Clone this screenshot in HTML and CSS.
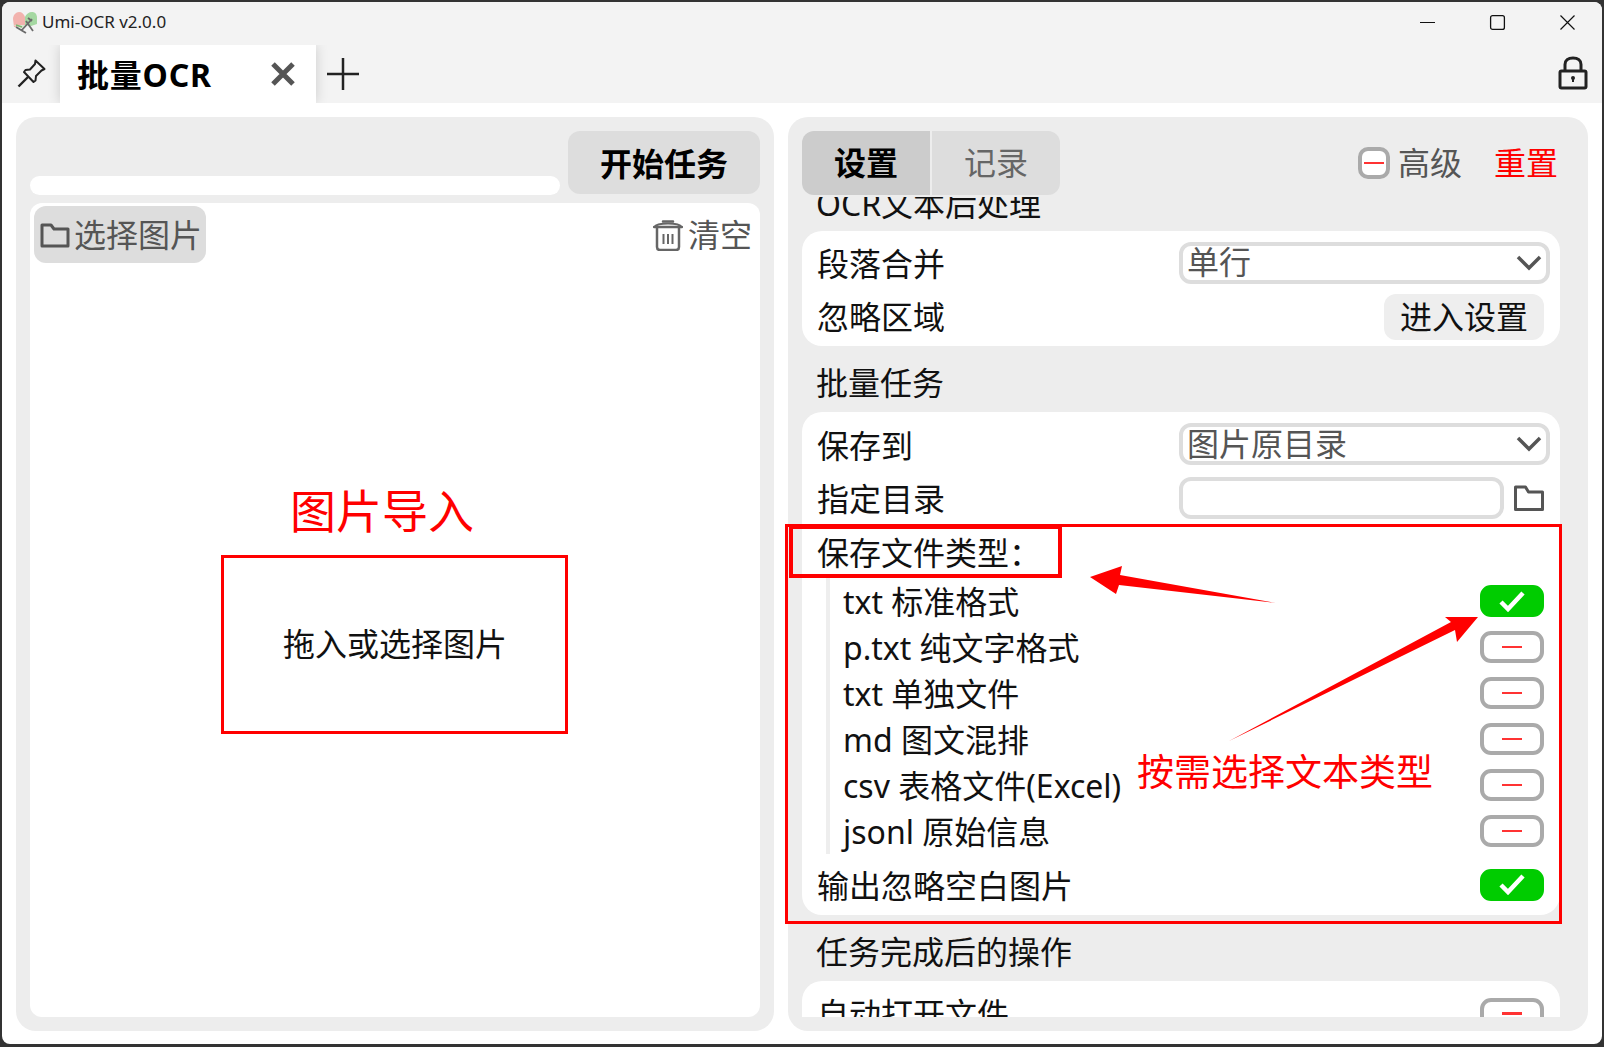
FILE: index.html
```html
<!DOCTYPE html>
<html lang="zh">
<head>
<meta charset="utf-8">
<title>Umi-OCR v2.0.0</title>
<link rel="stylesheet" href="styles.css">
</head>
<body>
<div class="window">
  <header class="titlebar">
    <svg class="logo" width="26" height="24" viewBox="0 0 26 24"><path d="M1 8c0-4 3-7 6-7s5 2 6 5v8l-5 2H2z" fill="#f2b3ae"/><path d="M13 6c1-3 4-5 7-5s5 2 5 6v6l-6 2-6-1z" fill="#a5d8a2"/><path d="M1 14h13l-3 4z" fill="#dbe6d2"/><path d="M4 16l10 6M9 20l11-12M14 10l7 10M16 7l4 3" stroke="#6b6b6b" stroke-width="1.800" fill="none"/><path d="M4 14l6 2" stroke="#7cb66f" stroke-width="1.500"/></svg>
    <span class="title">Umi-OCR v2.0.0</span>
    <div class="winbtns">
      <svg width="17" height="17" viewBox="0 0 17 17"><path d="M1 8.500h15" stroke="#111" stroke-width="1.200"/></svg>
      <svg width="17" height="17" viewBox="0 0 17 17"><rect x="1.600" y="1.600" width="13.800" height="13.800" rx="2" fill="none" stroke="#111" stroke-width="1.300"/></svg>
      <svg width="17" height="17" viewBox="0 0 17 17"><path d="M1.500 1.500l14 14M15.500 1.500l-14 14" stroke="#111" stroke-width="1.200"/></svg>
    </div>
  </header>
  <nav class="tabbar">
    <svg class="pin" width="30" height="30" viewBox="0 0 30 30"><path d="M18.500 2.500l9 8.500-3 1.500-5.500 5.500-.5 4.500-2 1.500L7 14l1.500-2 4.500-.5 5-5.500z" fill="none" stroke="#222" stroke-width="2" stroke-linejoin="round"/><path d="M11 19L1.500 28.500" stroke="#222" stroke-width="2.400"/></svg>
    <div class="tab">
      <span class="tab-name">批量OCR</span>
      <svg width="26" height="26" viewBox="0 0 26 26"><path d="M3 3l20 20M23 3L3 23" stroke="#555" stroke-width="5"/></svg>
    </div>
    <svg class="plus" width="32" height="32" viewBox="0 0 32 32"><path d="M0 16h32M16 0v32" stroke="#222" stroke-width="2.500"/></svg>
    <svg class="lock" width="30" height="34" viewBox="0 0 30 34"><path d="M7 15V8.500C7 4.500 10 2 15 2s8 2.500 8 6.500V15" fill="none" stroke="#222" stroke-width="3"/><rect x="2" y="15" width="26" height="17" rx="1.500" fill="none" stroke="#222" stroke-width="3"/><circle cx="15" cy="22" r="2" fill="#222"/><path d="M15 22v4" stroke="#222" stroke-width="2"/></svg>
  </nav>
  <main class="content">
    <section class="panel left">
      <div class="left-head">
        <div class="progress"></div>
        <button class="start">开始任务</button>
      </div>
      <div class="list">
        <div class="list-head">
          <div class="choose">
            <svg width="30" height="28" viewBox="0 0 30 28"><path d="M2 25V4h9l3 4h14v17z" fill="none" stroke="#555" stroke-width="3" stroke-linejoin="round"/></svg>
            <span>选择图片</span>
          </div>
          <div class="clear">
            <svg width="30" height="32" viewBox="0 0 30 32"><path d="M1 8h28M10 2.500h10" stroke="#666" stroke-width="2.500" stroke-linecap="round"/><path d="M1.500 8C3 5 8 4.500 15 4.500S27 5 28.500 8" fill="none" stroke="#666" stroke-width="2"/><path d="M4 9v19c0 2 1 3 3 3h16c2 0 3-1 3-3V9" fill="none" stroke="#666" stroke-width="2.500"/><path d="M10.500 15v10M15 15v10M19.500 15v10" stroke="#666" stroke-width="2"/></svg>
            <span>清空</span>
          </div>
        </div>
        <div class="drop">拖入或选择图片</div>
      </div>
    </section>
    <section class="panel right">
      <div class="right-head">
        <div class="seg">
          <div class="seg-item on">设置</div>
          <div class="seg-item">记录</div>
        </div>
        <div class="adv">
          <span class="mini"><i></i></span>
          <span class="adv-text">高级</span>
          <span class="reset">重置</span>
        </div>
      </div>
      <div class="scroll">
        <h2 class="sec first">OCR文本后处理</h2>
        <div class="card">
          <div class="row"><span>段落合并</span><div class="combo"><span>单行</span><svg width="26" height="16" viewBox="0 0 26 16"><path d="M2 2l11 11L24 2" fill="none" stroke="#555" stroke-width="3.500"/></svg></div></div>
          <div class="row"><span>忽略区域</span><button class="enter">进入设置</button></div>
        </div>
        <h2 class="sec">批量任务</h2>
        <div class="card batch">
          <div class="row"><span>保存到</span><div class="combo"><span>图片原目录</span><svg width="26" height="16" viewBox="0 0 26 16"><path d="M2 2l11 11L24 2" fill="none" stroke="#555" stroke-width="3.500"/></svg></div></div>
          <div class="row"><span>指定目录</span><div class="pathrow"><div class="input"></div><svg width="30" height="26" viewBox="0 0 30 26"><path d="M1.500 24.500V2h10l3 5h14v17.500z" fill="none" stroke="#555" stroke-width="3" stroke-linejoin="round"/></svg></div></div>
          <div class="row head"><span>保存文件类型：</span></div>
          <div class="subs">
            <div class="sub"><span>txt 标准格式</span><span class="sw on"><svg width="26" height="21" viewBox="0 0 26 21"><path d="M2 11l7 7L24 2" fill="none" stroke="#fff" stroke-width="4.500"/></svg></span></div>
            <div class="sub"><span>p.txt 纯文字格式</span><span class="sw"><i></i></span></div>
            <div class="sub"><span>txt 单独文件</span><span class="sw"><i></i></span></div>
            <div class="sub"><span>md 图文混排</span><span class="sw"><i></i></span></div>
            <div class="sub"><span>csv 表格文件(Excel)</span><span class="sw"><i></i></span></div>
            <div class="sub"><span>jsonl 原始信息</span><span class="sw"><i></i></span></div>
          </div>
          <div class="row last"><span>输出忽略空白图片</span><span class="sw on"><svg width="26" height="21" viewBox="0 0 26 21"><path d="M2 11l7 7L24 2" fill="none" stroke="#fff" stroke-width="4.500"/></svg></span></div>
        </div>
        <h2 class="sec">任务完成后的操作</h2>
        <div class="card">
          <div class="row"><span>自动打开文件</span><span class="sw"><i></i></span></div>
        </div>
      </div>
    </section>
  </main>
  <div class="note box-drop"></div>
  <div class="note label-drop">图片导入</div>
  <div class="note box-types"></div>
  <div class="note box-head"></div>
  <div class="note label-types">按需选择文本类型</div>
  <svg class="note arrows" width="1604" height="1047" viewBox="0 0 1604 1047">
    <path d="M1090 577L1122 566L1120 575L1276 603L1119 585L1116 594z" fill="#f00"/>
    <path d="M1478 617L1457 642L1455 630L1229 741L1451 622L1445 617z" fill="#f00"/>
  </svg>
</div>
</body>
</html>
```
FILE: styles.css
```css
* { box-sizing: border-box; }
html, body { margin: 0; height: 100%; }
body {
  background: #333;
  padding: 2px 2px 3px;
  overflow: hidden;
  font-family: "Noto Sans", "Noto Sans CJK SC", sans-serif;
  font-size: 32px;
  line-height: 44px;
  color: #111;
}
.window {
  position: relative;
  height: 1042px;
  background: #fff;
  border-radius: 8px;
  overflow: hidden;
  display: flex;
  flex-direction: column;
}
.titlebar {
  height: 43px;
  flex: none;
  background: #f3f3f3;
  display: flex;
  align-items: center;
  padding-left: 10px;
}
.logo { flex: none; margin-top: -2px; }
.title { margin-left: 4px; font-size: 17px; line-height: 20px; color: #222; margin-top: -3px; }
.winbtns { margin-left: auto; margin-right: 26px; display: flex; align-items: center; gap: 53px; margin-top: -3px; }
.tabbar {
  height: 58px;
  flex: none;
  background: #f3f3f3;
  display: flex;
  align-items: center;
}
.pin { margin-left: 15px; margin-right: 13px; flex: none; margin-top: -2px; }
.tab {
  width: 256px;
  height: 58px;
  background: #fff;
  display: flex;
  align-items: center;
  justify-content: space-between;
  padding: 0 20px 0 17px;
  box-shadow: 0 0 12px rgba(0,0,0,.16);
  clip-path: inset(0 -16px 0 -16px);
}
.tab-name { font-weight: 700; color: #000; letter-spacing: .8px; padding-top: 1px; }
.plus { margin-left: 11px; flex: none; }
.lock { margin-left: auto; margin-right: 14px; flex: none; margin-top: -2px; }
.content {
  flex: 1;
  min-height: 0;
  display: flex;
  gap: 14px;
  padding: 14px 14px 13px;
}
.panel {
  background: #ededed;
  border-radius: 20px;
  padding: 14px;
  display: flex;
  flex-direction: column;
  min-height: 0;
}
.left { width: 758px; flex: none; }
.right { flex: 1; min-width: 0; }
.left-head {
  display: flex;
  align-items: flex-end;
  justify-content: space-between;
  height: 63px;
  flex: none;
}
.progress { width: 530px; height: 19px; background: #fff; border-radius: 10px; margin-bottom: -1px; }
button {
  font: inherit;
  border: 0;
  padding: 0;
  color: inherit;
}
.start {
  width: 192px;
  height: 63px;
  padding-top: 2px;
  background: #ddd;
  border-radius: 12px;
  font-weight: 700;
  color: #000;
}
.list {
  margin-top: 9px;
  flex: 1;
  min-height: 0;
  background: #fff;
  border-radius: 12px;
  display: flex;
  flex-direction: column;
}
.list-head {
  display: flex;
  justify-content: space-between;
  align-items: center;
  padding: 3px 8px 0 4px;
  flex: none;
  color: #555;
}
.choose {
  width: 172px;
  height: 57px;
  background: #ddd;
  border-radius: 12px;
  display: flex;
  align-items: center;
  padding-left: 6px;
  gap: 4px;
}
.choose svg { flex: none; }
.clear { display: flex; align-items: center; gap: 5px; }
.clear svg { flex: none; }
.drop {
  flex: 1;
  display: flex;
  align-items: center;
  justify-content: center;
  padding-top: 7px;
}
.right-head {
  display: flex;
  justify-content: space-between;
  align-items: center;
  height: 64px;
  flex: none;
  padding-right: 16px;
}
.seg { display: flex; gap: 2px; }
.seg-item {
  width: 128px;
  height: 64px;
  background: #ddd;
  color: #666;
  display: flex;
  align-items: center;
  justify-content: center;
  border-radius: 0 12px 12px 0;
}
.seg-item.on {
  background: #ccc;
  color: #000;
  font-weight: 700;
  border-radius: 12px 0 0 12px;
}
.adv { display: flex; align-items: center; color: #555; }
.mini {
  width: 32px;
  height: 32px;
  border: 4px solid #aaa;
  border-radius: 10px;
  background: #fff;
  display: flex;
  align-items: center;
  justify-content: center;
}
.mini i, .sw i { display: block; width: 20px; height: 2.500px; background: #f33; }
.adv-text { margin-left: 8px; }
.reset { margin-left: 32px; color: #f00; }
.scroll {
  margin-top: 2px;
  flex: 1;
  min-height: 0;
  overflow: hidden;
  padding-right: 14px;
}
.sec {
  margin: 0;
  height: 66px;
  padding: 8px 0 0 14px;
  font-size: 32px;
  font-weight: 400;
  display: flex;
  align-items: center;
}
.sec.first { margin-top: -32px; padding-top: 12px; }
.card {
  background: #fff;
  border-radius: 20px;
  padding: 6px 16px 3px 15px;
}
.card.batch { padding-bottom: 4px; }
.row {
  height: 53px;
  display: flex;
  align-items: center;
  justify-content: space-between;
}
.batch .row > span:first-child { padding-top: 2px; }
.batch .row.head { height: 54px; }
.batch .row.head > span:first-child { padding-top: 3px; }
.row.last { margin-top: 4px; }
.combo {
  width: 371px;
  height: 42px;
  border: 4px solid #ddd;
  border-radius: 12px;
  margin: 0 -6px 2px 0;
  display: flex;
  align-items: center;
  justify-content: space-between;
  padding: 0 4px 0 4px;
  color: #555;
}
.combo span { line-height: 34px; margin-top: -2px; }
.batch .combo span { margin-top: 1px; }
.combo svg { flex: none; }
.enter {
  width: 160px;
  height: 46px;
  background: #eee;
  border-radius: 12px;
}
.pathrow { display: flex; align-items: center; gap: 10px; width: 371px; margin-right: -6px; }
.pathrow svg { flex: none; }
.input { width: 325px; height: 42px; border: 4px solid #ddd; border-radius: 12px; }
.subs {
  margin-left: 9px;
  border-left: 4px solid #eee;
  padding-left: 13px;
}
.sub {
  height: 46px;
  display: flex;
  align-items: center;
  justify-content: space-between;
}
.sub > span:first-child { padding-top: 2px; }
.sw {
  width: 64px;
  height: 32px;
  border: 4px solid #aaa;
  border-radius: 11px;
  display: flex;
  align-items: center;
  justify-content: center;
  background: #fff;
  flex: none;
}
.sw.on { background: #0c0; border-color: #0c0; }
.note { position: absolute; }
.box-drop { left: 219px; top: 553px; width: 347px; height: 179px; border: 3px solid #f00; }
.label-drop { left: 288px; top: 478px; font-size: 46px; line-height: 60px; color: #f00; }
.box-types { left: 783px; top: 522px; width: 777px; height: 400px; border: 3px solid #f00; }
.box-head { left: 787px; top: 523px; width: 273px; height: 53px; border: 4px solid #f00; }
.label-types { left: 1135px; top: 745px; font-size: 37px; line-height: 50px; color: #f00; white-space: nowrap; }
.arrows { left: -2px; top: -2px; pointer-events: none; }
```
